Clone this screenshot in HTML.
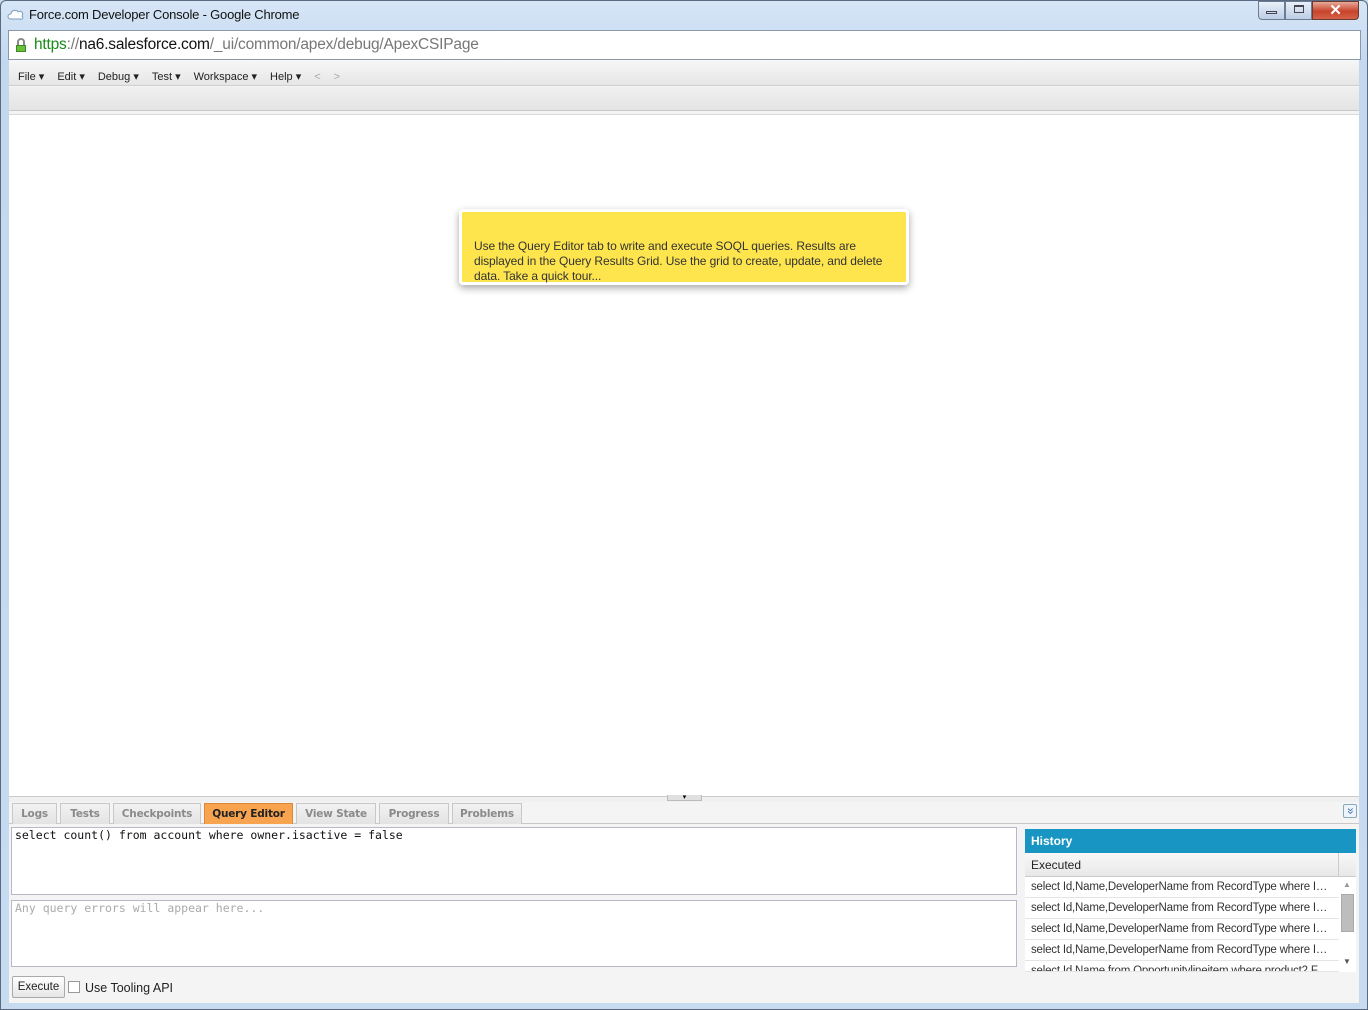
<!DOCTYPE html>
<html><head><style>
*{margin:0;padding:0;box-sizing:border-box}
body{width:1368px;height:1010px;position:relative;overflow:hidden;background:#c9dcf0;font-family:"Liberation Sans",sans-serif}
.a{position:absolute}
.frame{left:0;top:0;width:1368px;height:1010px;border:1px solid #5a6a80;border-radius:6px 6px 0 0;background:linear-gradient(#d7e6f7,#c3d8ef 60px,#c6daf0)}
.menu span{margin-right:13px;font-size:11px;color:#222}
.tab{top:803px;height:21px;border:1px solid #c8c8c8;border-bottom:none;background:linear-gradient(#f2f2f2,#e3e3e3);font-weight:bold;color:#8a8a8a;text-align:center;line-height:21px;font-family:"DejaVu Sans",sans-serif;font-size:10.5px;letter-spacing:-0.2px}
.hist{left:1025px;width:314px;height:21px;border-bottom:1px solid #e4e4e4;font-size:11.5px;color:#333;padding-left:6px;padding-right:8px;line-height:20px;white-space:nowrap;overflow:hidden;text-overflow:ellipsis;background:#fff;letter-spacing:-0.2px}
</style></head><body>
<div class="a frame"></div>
<svg class="a" style="left:7px;top:8px" width="18" height="14"><path d="M4 11 C0 11 0 6 4 6 C4 2 10 1 11 4 C14 2 17 5 15 8 C17 10 15 12 13 11 Z" fill="#fff" stroke="#7a9bbf"/></svg>
<div class="a" style="left:29px;top:7px;font-size:13px;color:#111;letter-spacing:-0.2px">Force.com Developer Console - Google Chrome</div>
<div class="a" style="left:1258px;top:1px;width:27px;height:19px;border:1px solid #6b7d95;border-radius:0 0 0 4px;background:linear-gradient(#e8f0fa,#bccde3)"></div>
<div class="a" style="left:1266px;top:11px;width:11px;height:3px;border:1px solid #445"></div>
<div class="a" style="left:1285px;top:1px;width:27px;height:19px;border:1px solid #6b7d95;background:linear-gradient(#e8f0fa,#bccde3)"></div>
<div class="a" style="left:1294px;top:5px;width:10px;height:8px;border:2px solid #445;border-width:2px 1px 1px 1px"></div>
<div class="a" style="left:1312px;top:1px;width:47px;height:19px;border:1px solid #6b3a30;border-radius:0 0 4px 0;background:linear-gradient(#e9a99a,#c8432b 55%,#d3634a);color:#fff;font-weight:bold;font-size:15px;text-align:center;line-height:17px">✕</div>
<div class="a" style="left:8px;top:30px;width:1353px;height:30px;background:#fff;border:1px solid #8a98a8"></div>
<div class="a" style="left:16px;top:38px;width:10px;height:13px;"><div style="width:8px;height:7px;margin-left:1px;border:2px solid #8a8a8a;border-bottom:none;border-radius:4px 4px 0 0"></div><div style="width:10px;height:7px;background:#6bbf3a;border:1px solid #3d8a22"></div></div>
<div class="a" style="left:34px;top:36px;font-size:15.5px;color:#777;letter-spacing:-0.2px"><span style="color:#1a8a1a">https</span>://<span style="color:#111">na6.salesforce.com</span>/_ui/common/apex/debug/ApexCSIPage</div>
<div class="a" style="left:9px;top:60px;width:1350px;height:943px;background:#f4f4f4"></div>
<div class="a" style="left:9px;top:60px;width:1350px;height:26px;background:linear-gradient(#f7f7f7,#e6e6e6);border-bottom:1px solid #d0d0d0"></div>
<div class="a menu" style="left:18px;top:67px;white-space:nowrap"><span>File ▾</span><span>Edit ▾</span><span>Debug ▾</span><span>Test ▾</span><span>Workspace ▾</span><span>Help ▾</span><span style="color:#aaa">&lt;</span><span style="color:#aaa">&gt;</span></div>
<div class="a" style="left:9px;top:87px;width:1350px;height:24px;background:linear-gradient(#f0f0f0,#e4e4e4);border-bottom:1px solid #c8c8c8"></div>
<div class="a" style="left:9px;top:114px;width:1350px;height:682px;background:#fff;border-top:1px solid #d8d8d8"></div>
<div class="a" style="left:459px;top:209px;width:450px;height:76px;background:#fee54e;border:3px solid #fff;border-radius:4px;box-shadow:0 3px 8px rgba(0,0,0,.35);padding:27px 0 0 12px;font-size:12px;line-height:15px;color:#333;letter-spacing:-0.1px">Use the Query Editor tab to write and execute SOQL queries. Results are displayed in the Query Results Grid. Use the grid to create, update, and delete data. Take a quick tour...</div>
<div class="a" style="left:9px;top:796px;width:1350px;height:6px;border-top:1px solid #ccc;background:#f0f0f0"></div>
<div class="a" style="left:667px;top:795px;width:35px;height:6px;background:#e0e0e0;border:1px solid #bbb;border-top:none;font-size:7px;text-align:center;line-height:5px">▾</div>
<div class="a" style="left:9px;top:823px;width:1350px;height:1px;background:#c8c8c8"></div>
<div class="a tab" style="left:12px;width:45px">Logs</div>
<div class="a tab" style="left:60px;width:50px">Tests</div>
<div class="a tab" style="left:113px;width:88px">Checkpoints</div>
<div class="a tab" style="left:204px;width:89px;background:#f7a350;color:#222;border-color:#d88a3a">Query Editor</div>
<div class="a tab" style="left:296px;width:80px">View State</div>
<div class="a tab" style="left:379px;width:70px">Progress</div>
<div class="a tab" style="left:452px;width:70px">Problems</div>
<div class="a" style="left:1343px;top:804px;width:14px;height:14px;border:1px solid #8ab;border-radius:2px;background:#eef4fb;color:#3a6fb0;font-size:12px;line-height:10px;text-align:center;transform:rotate(90deg)">»</div>
<div class="a" style="left:11px;top:827px;width:1006px;height:68px;background:#fff;border:1px solid #b8b8c8;font-family:'DejaVu Sans Mono','Liberation Mono',monospace;font-size:11.5px;padding:0 3px;color:#111;line-height:14px">select count() from account where owner.isactive = false</div>
<div class="a" style="left:11px;top:900px;width:1006px;height:67px;background:#fff;border:1px solid #b8b8c8;font-family:'DejaVu Sans Mono','Liberation Mono',monospace;font-size:11.5px;padding:0 3px;color:#aaa;line-height:14px">Any query errors will appear here...</div>
<div class="a" style="left:1025px;top:829px;width:331px;height:24px;background:#1895c2;color:#fff;font-weight:bold;font-size:12px;padding:5px 6px">History</div>
<div class="a" style="left:1025px;top:853px;width:331px;height:24px;background:linear-gradient(#f8f8f8,#e8e8e8);border-bottom:1px solid #ccc;font-size:12px;padding:5px 6px;color:#222">Executed</div>
<div class="a" style="left:1338px;top:853px;width:1px;height:24px;background:#ccc"></div>
<div class="a hist" style="top:877px">select Id,Name,DeveloperName from RecordType where Id in ('x')</div>
<div class="a hist" style="top:898px">select Id,Name,DeveloperName from RecordType where Id in ('x')</div>
<div class="a hist" style="top:919px">select Id,Name,DeveloperName from RecordType where Id in ('x')</div>
<div class="a hist" style="top:940px">select Id,Name,DeveloperName from RecordType where Id in ('x')</div>
<div class="a hist" style="top:961px;height:11px;line-height:20px">select Id,Name from Opportunitylineitem where product2.F...</div>
<div class="a" style="left:1339px;top:877px;width:17px;height:95px;background:#fff"></div>
<div class="a" style="left:1341px;top:894px;width:13px;height:38px;background:#bdbdbd;border:1px solid #aaa"></div>
<div class="a" style="left:1343px;top:880px;font-size:8px;color:#999">▲</div>
<div class="a" style="left:1343px;top:957px;font-size:8px;color:#555">▼</div>
<div class="a" style="left:12px;top:976px;width:53px;height:22px;border:1px solid #aaa;border-radius:2px;background:linear-gradient(#fff,#e6e6e6);font-size:11.5px;text-align:center;line-height:20px;color:#222">Execute</div>
<div class="a" style="left:68px;top:981px;width:12px;height:12px;border:1px solid #999;background:#fff"></div>
<div class="a" style="left:85px;top:981px;font-size:12.5px;color:#222">Use Tooling API</div>
</body></html>
